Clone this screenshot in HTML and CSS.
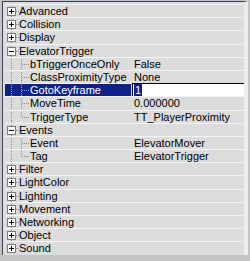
FILE: index.html
```html
<!DOCTYPE html>
<html>
	<head>
		<link rel="stylesheet" href="styles.css">
	</head>
	<body>
		<div class="grid">
			<div class="row cat"><span class="key"><span class="tree"><span class="box plus"></span></span><span class="name">Advanced</span></span></div>
			<div class="row cat"><span class="key"><span class="tree"><span class="box plus"></span></span><span class="name">Collision</span></span></div>
			<div class="row cat"><span class="key"><span class="tree"><span class="box plus"></span></span><span class="name">Display</span></span></div>
			<div class="row cat"><span class="key"><span class="tree"><span class="box minus"></span></span><span class="name">ElevatorTrigger</span></span></div>
			<div class="row prop"><span class="key"><span class="tree"><span class="elbow"></span></span><span class="name">bTriggerOnceOnly</span></span><span class="value">False</span></div>
			<div class="row prop"><span class="key"><span class="tree"><span class="elbow"></span></span><span class="name">ClassProximityType</span></span><span class="value">None</span></div>
			<div class="row prop sel"><span class="key"><span class="tree"><span class="elbow"></span></span><span class="name">GotoKeyframe</span></span><span class="value"><span class="picked">1</span></span></div>
			<div class="row prop"><span class="key"><span class="tree"><span class="elbow"></span></span><span class="name">MoveTime</span></span><span class="value">0.000000</span></div>
			<div class="row prop lastchild"><span class="key"><span class="tree"><span class="elbow"></span></span><span class="name">TriggerType</span></span><span class="value">TT_PlayerProximity</span></div>
			<div class="row cat"><span class="key"><span class="tree"><span class="box minus"></span></span><span class="name">Events</span></span></div>
			<div class="row prop"><span class="key"><span class="tree"><span class="elbow"></span></span><span class="name">Event</span></span><span class="value">ElevatorMover</span></div>
			<div class="row prop lastchild"><span class="key"><span class="tree"><span class="elbow"></span></span><span class="name">Tag</span></span><span class="value">ElevatorTrigger</span></div>
			<div class="row cat"><span class="key"><span class="tree"><span class="box plus"></span></span><span class="name">Filter</span></span></div>
			<div class="row cat"><span class="key"><span class="tree"><span class="box plus"></span></span><span class="name">LightColor</span></span></div>
			<div class="row cat"><span class="key"><span class="tree"><span class="box plus"></span></span><span class="name">Lighting</span></span></div>
			<div class="row cat"><span class="key"><span class="tree"><span class="box plus"></span></span><span class="name">Movement</span></span></div>
			<div class="row cat"><span class="key"><span class="tree"><span class="box plus"></span></span><span class="name">Networking</span></span></div>
			<div class="row cat"><span class="key"><span class="tree"><span class="box plus"></span></span><span class="name">Object</span></span></div>
			<div class="row cat lastroot"><span class="key"><span class="tree"><span class="box plus"></span></span><span class="name">Sound</span></span></div>
		</div>
	</body>
</html>
```

FILE: styles.css
```css
body {
	margin: 0;
	background-color: #c4c4c4;
	font-family: "Liberation Sans", Arial, sans-serif;
	font-size: 11px;
	color: #000;
}

.grid {
	width: 241px;
	margin: 1px 0 0 2px;
	padding-top: 2px;
	border-top: 1px solid #3c4656;
	border-left: 1px solid #3c4656;
	border-right: 4px solid #ececec;
	background-color: #dcdcdc;
}

.row {
	display: flex;
	height: 13.2px;
	line-height: 12px;
}

.key {
	display: flex;
	flex: none;
	width: 126px;
	margin-left: 2px;
	border-top: 1px solid #f4f4f4;
	white-space: nowrap;
	overflow: hidden;
}

.cat .key {
	width: 238px;
}

.value {
	flex: 1;
	padding-left: 3px;
	border-top: 1px solid #f4f4f4;
	white-space: nowrap;
}

.tree {
	position: relative;
	flex: none;
}

.cat .tree {
	width: 14px;
}

.prop .tree {
	width: 25px;
}

/* root level dotted line */
.tree::before {
	content: "";
	position: absolute;
	left: 6px;
	top: -1px;
	bottom: 0;
	width: 1px;
	background: repeating-linear-gradient(to bottom, #8a8a8a 0 1px, transparent 1px 2px);
}

.lastroot .tree::before {
	bottom: 50%;
}

.cat .tree::after {
	content: "";
	position: absolute;
	left: 11px;
	top: 6px;
	width: 3px;
	height: 1px;
	background: repeating-linear-gradient(to right, #8a8a8a 0 1px, transparent 1px 2px);
}

.box {
	position: absolute;
	left: 2px;
	top: 2px;
	width: 9px;
	height: 9px;
	box-sizing: border-box;
	border: 1px solid #7c7c7c;
	background-color: #fff;
	z-index: 1;
}

.box::before {
	content: "";
	position: absolute;
	left: 1px;
	top: 3px;
	width: 5px;
	height: 1px;
	background-color: #000;
}

.plus::after {
	content: "";
	position: absolute;
	left: 3px;
	top: 1px;
	width: 1px;
	height: 5px;
	background-color: #000;
}

.elbow::before {
	content: "";
	position: absolute;
	left: 16px;
	top: -1px;
	bottom: 0;
	width: 1px;
	background: repeating-linear-gradient(to bottom, #8a8a8a 0 1px, transparent 1px 2px);
}

.lastchild .elbow::before {
	bottom: 50%;
}

.elbow::after {
	content: "";
	position: absolute;
	left: 17px;
	top: 6px;
	width: 8px;
	height: 1px;
	background: repeating-linear-gradient(to right, #8a8a8a 0 1px, transparent 1px 2px);
}

.sel .key {
	background-color: #0e2288;
	color: #fff;
}

.sel .tree::before,
.sel .elbow::before {
	background: repeating-linear-gradient(to bottom, #9aa4d8 0 1px, transparent 1px 2px);
}

.sel .elbow::after {
	background: repeating-linear-gradient(to right, #9aa4d8 0 1px, transparent 1px 2px);
}

.sel .value {
	margin-left: 1px;
	padding-left: 1px;
	border-top: 1px solid #000;
	border-left: 1px solid #000;
	background-color: #fff;
}

.picked {
	display: inline-block;
	padding: 0 1px;
	background-color: #0e2288;
	color: #fff;
}
```
